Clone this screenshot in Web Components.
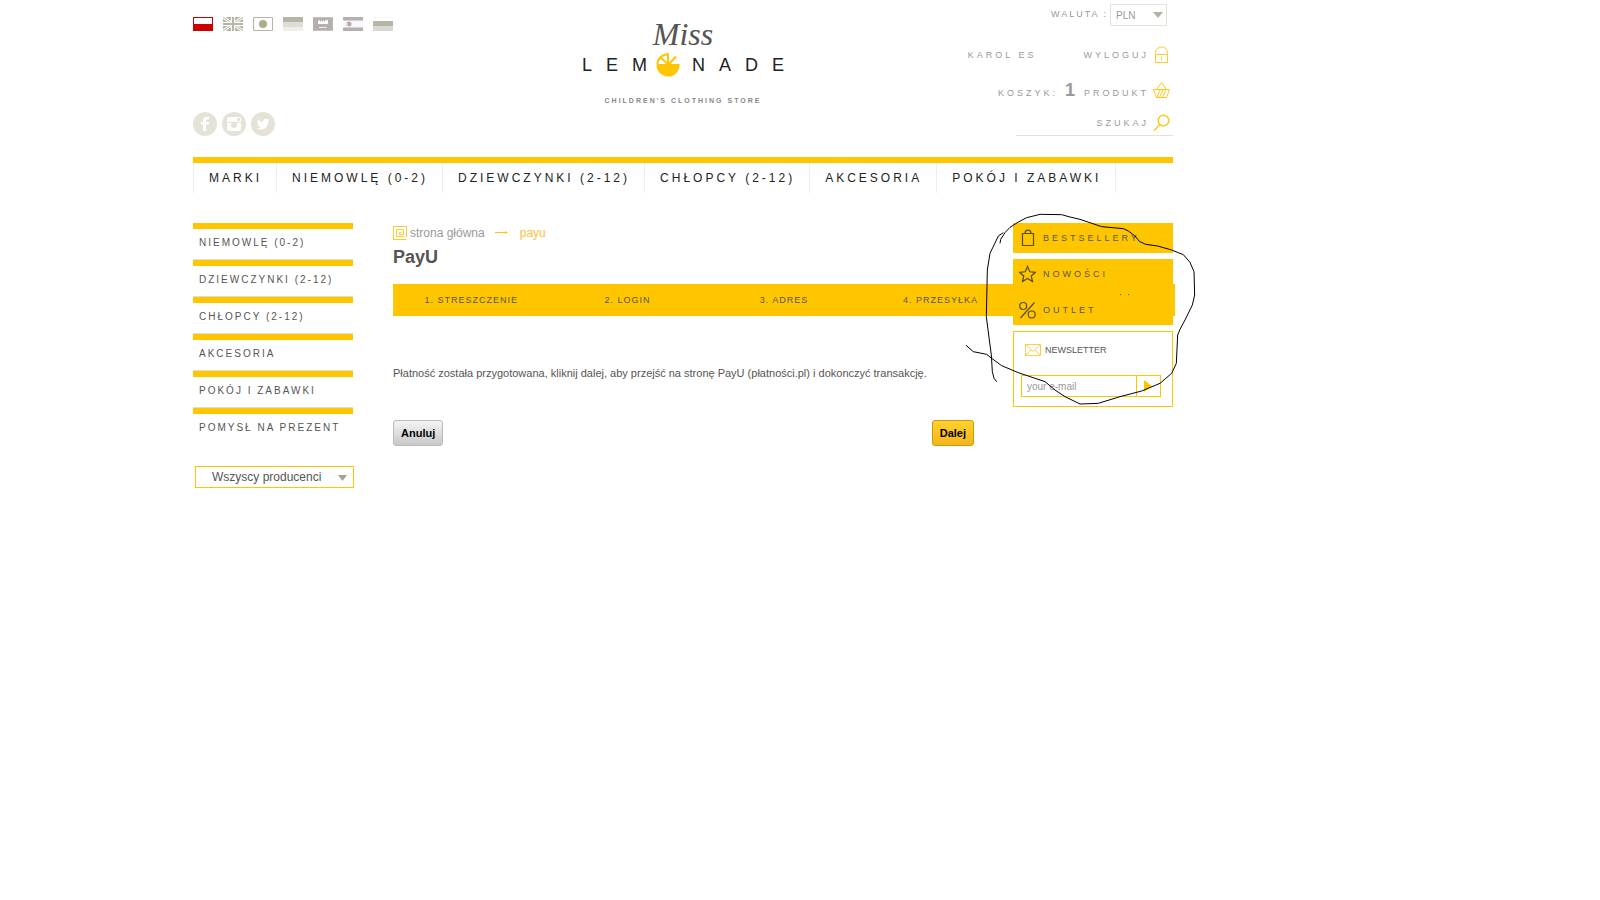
<!DOCTYPE html>
<html lang="pl">
<head>
<meta charset="utf-8">
<title>Miss Lemonade - PayU</title>
<style>
  html { --yellow: #ffc600; --ink: #555; --muted: #999; --line: #e4e3d8; }
  body { margin: 0; background: #fff; color: var(--ink); font-family: "Liberation Sans", Arial, sans-serif; font-size: 11px; }
</style>
</head>
<body>
<lemon-shop>
  <shop-header slot="header"></shop-header>
  <main-nav slot="header"></main-nav>
  <side-menu slot="left"></side-menu>
  <payu-page></payu-page>
  <side-boxes slot="right"></side-boxes>
</lemon-shop>

<script>
const reset = `<style>
  *, *::before { box-sizing: border-box; }
  :host { display: block; }
  ul, ol { list-style: none; margin: 0; padding: 0; }
  h1, p { margin: 0; }
  a { color: inherit; text-decoration: none; }
  svg { display: block; flex: none; }
  input, select, button { font-family: inherit; margin: 0; border-radius: 0; outline: 0; }
</style>`;

function define(name, html) {
  const template = document.createElement('template');
  template.innerHTML = reset + html;
  customElements.define(name, class extends HTMLElement {
    constructor() {
      super();
      this.attachShadow({ mode: 'open' }).append(template.content.cloneNode(true));
    }
  });
}

define('lemon-shop', `
<style>
  :host { position: relative; max-width: 980px; margin-left: 193px; }
  .columns { display: flex; gap: 40px; padding-top: 30px; }
  .left, .right { flex: 0 0 160px; min-width: 0; }
  .center { flex: 1; min-width: 0; }
  .right { position: relative; z-index: 1; }
  pen-mark { position: absolute; right: -32px; top: 200px; z-index: 2; pointer-events: none; }
</style>
<slot name="header"></slot>
<div class="columns">
  <div class="left"><slot name="left"></slot></div>
  <div class="center"><slot></slot></div>
  <div class="right"><slot name="right"></slot></div>
</div>
<pen-mark></pen-mark>`);

define('pen-mark', `
<svg width="250" height="220" viewBox="0 0 750 660" fill="none" stroke="#000" stroke-width="3" stroke-linejoin="round">
  <path d="M135 130L137 118L150 98L165 82L190 66L215 53L255 43L320 44L345 51L375 58L440 80L505 86L520 93L540 108L553 124L572 133L608 138L650 150L685 164L705 187L717 215L719 285L712 315L690 360L675 388L668 405L664 490L650 520L615 550L560 573L495 590L430 610L375 612L330 590L300 570L270 545L190 518L140 497L110 475L95 463L55 455L33 436"/>
  <path d="M145 98L130 108L105 160L97 210L94 350L103 420L109 465L112 515L117 535L125 545"/>
</svg>`);

define('shop-header', `
<style>
  header { display: grid; grid-template-columns: 1fr auto 1fr; height: 157px; }
  .left { display: flex; flex-direction: column; justify-content: space-between; padding: 17px 0 21px; }
</style>
<header>
  <div class="left"><language-list></language-list><social-links></social-links></div>
  <shop-logo></shop-logo>
  <account-panel></account-panel>
</header>`);

define('language-list', `
<style> ul { display: flex; gap: 10px; } a { display: block; }</style>
<ul>
  <li><a href="#pl" aria-label="Polski"><svg width="20" height="14"><path fill="#c00" d="M0 0h20v14H0z"/><path fill="#fff" d="M1 1h18v6H1z"/></svg></a></li>
  <li><a href="#en" aria-label="English"><svg width="20" height="14"><path fill="#b8b5a6" d="M0 0h20v14H0z"/><path d="M0 0L20 14M20 0L0 14" stroke="#fff" stroke-width="3"/><path d="M0 0L20 14M20 0L0 14" stroke="#b8b5a6"/><path d="M10 0V14M0 7H20" stroke="#fff" stroke-width="4"/><path d="M10 0V14M0 7H20" stroke="#b8b5a6" stroke-width="2"/></svg></a></li>
  <li><a href="#ja" aria-label="日本語"><svg width="20" height="14"><path fill="#fff" stroke="#b8b5a6" d="M.5.5h19v13H.5z"/><circle cx="10" cy="7" r="4" fill="#aeac8c"/></svg></a></li>
  <li><a href="#de" aria-label="Deutsch"><svg width="20" height="14"><path fill="#b8b5a6" d="M0 0h20v5H0z"/><path fill="#dedcd5" d="M0 5h20v5H0z"/><path fill="#efeeea" d="M0 10h20v4H0z"/></svg></a></li>
  <li><a href="#ar" aria-label="العربية"><svg width="20" height="14"><path fill="#c4c0be" d="M0 0h20v14H0z"/><path fill="#b4b0ae" d="M0 1h20v12H0z"/><path fill="#fff" d="M5 4l2-1v2l2-2v2l2-2v2l2-2 2 0v4H5z"/><path stroke="#eee" d="M6 10.500H14"/></svg></a></li>
  <li><a href="#es" aria-label="Español"><svg width="20" height="14"><path fill="#b4b0ac" d="M0 0h20v14H0z"/><path fill="#d8d3d7" d="M0 3h20v8H0z"/><path fill="#fbf7fc" d="M0 4h20v6H0z"/><circle cx="6" cy="7" r="2.500" fill="#b0adab"/><path fill="#d5d3d5" d="M3 6h2v3H3z"/></svg></a></li>
  <li><a href="#ru" aria-label="Русский"><svg width="20" height="14"><path fill="#f4f4f2" d="M0 0h20v1H0z"/><path fill="#b8b5a6" d="M0 4h20v5H0z"/><path fill="#d9d8d2" d="M0 9h20v5H0z"/></svg></a></li>
</ul>`);

define('social-links', `
<style> ul { display: flex; gap: 5px; } a { display: block; }</style>
<ul>
  <li><a href="#facebook" aria-label="Facebook"><svg width="24" height="24"><circle cx="12" cy="12" r="12" fill="#e5e3d8"/><path fill="#fff" d="M10 19v-6.500H8V10h2V8.500C10 6 11.500 5 13.500 5H16v2.600h-1.500c-1 0-1.500.4-1.500 1.200V10h3l-.4 2.500H13V19z"/></svg></a></li>
  <li><a href="#instagram" aria-label="Instagram"><svg width="24" height="24"><circle cx="12" cy="12" r="12" fill="#e5e3d8"/><rect x="5" y="5" width="14" height="14" rx="2" fill="#fff"/><path fill="#e5e3d8" d="M15 6h3v3h-3zM5 10h14v1H5z"/><circle cx="12" cy="13" r="3" fill="#e5e3d8"/><path fill="#fff" d="M10 8h4v2h-4z"/></svg></a></li>
  <li><a href="#twitter" aria-label="Twitter"><svg width="24" height="24"><circle cx="12" cy="12" r="12" fill="#e5e3d8"/><path fill="#fff" d="M18.500 8.200l-1.400 1.500c.2 4.500-3 7.800-7 7.800-1.700 0-3.200-.4-4.300-1.200 1.500.1 2.800-.3 3.900-1.100-1.200-.1-2.100-.8-2.500-1.900h1.200c-1.300-.4-2.100-1.400-2.100-2.700l1.200.3c-1.200-1-1.400-2.400-.7-3.600 1.400 1.600 3 2.500 5.200 2.700-.4-3 2.800-4.300 4.600-2.500l1.700-.6-1 1.400z"/></svg></a></li>
</ul>`);

define('shop-logo', `
<style>
  a { display: flex; flex-direction: column; align-items: center; padding-top: 18px; color: #222; }
  .miss { font: italic 32px/32px "Liberation Serif", serif; color: #555; }
  .word { display: flex; align-items: center; font-size: 18px; line-height: 24px; letter-spacing: 14px; margin-top: 3px; }
  .word svg { margin-left: -5px; }
  .tail { margin: 0 -14px 0 12px; }
  .sub { font-size: 7px; line-height: 8px; font-weight: bold; letter-spacing: 2px; color: #888; margin-top: 20px; }
</style>
<a href="#home">
  <span class="miss">Miss</span>
  <span class="word"><span>LEM</span>
    <svg width="24" height="24"><path fill="#ffc600" d="M1 11h22.500a11.500 11.500 0 0 1-23 2z"/><path fill="none" stroke="#ffc600" stroke-width="2" d="M1.500 11A10.500 10 0 0 1 12 1.200V11M12 11L4.500 4.500M13 11L20 3.500"/></svg>
    <span class="tail">NADE</span></span>
  <span class="sub">CHILDREN'S CLOTHING STORE</span>
</a>`);

define('account-panel', `
<style>
  :host { padding-top: 4px; color: #999; font-size: 9px; letter-spacing: 3px; }
  .row { display: flex; align-items: center; justify-content: flex-end; height: 24px; padding-right: 3px; }
  .currency { height: 22px; padding-right: 6px; letter-spacing: 2px; gap: 2px; }
  .currency label { padding-bottom: 2px; }
  .picker { position: relative; }
  select { appearance: none; display: block; width: 57px; height: 22px; border: 1px solid var(--line); background: #fff; color: #999; font-size: 10px; padding: 0 5px; }
  .picker svg { position: absolute; right: 4px; top: 8px; pointer-events: none; }
  .user { margin-top: 17px; }
  .user a + a { margin-left: 47px; }
  .row > svg { margin-left: 4px; }
  .cart { margin-top: 11px; }
  .cart a { display: flex; align-items: baseline; }
  .cart b { font-size: 18px; line-height: 20px; margin: 0 6px 0 7px; }
  .search { margin: 9px 0 0 auto; width: 157px; height: 25px; border-bottom: 1px solid var(--line); }
  input { width: 100px; border: 0; padding: 0; background: none; text-align: right; font-size: 9px; letter-spacing: 3px; color: #999; }
  input::placeholder { color: #999; opacity: 1; }
</style>
<div class="row currency"><label for="currency">WALUTA :</label>
  <span class="picker"><select id="currency"><option>PLN</option></select><svg width="10" height="6"><path fill="#b5b09f" d="M0 0h10L5 6z"/></svg></span></div>
<div class="row user"><a href="#account">KAROL ES</a><a href="#logout">WYLOGUJ</a>
  <svg width="17" height="18" fill="none" stroke="#ffcb2b"><path d="M2.500 8.500h12v8h-12zM2.500 8.500V6.500a6 5.500 0 0 1 12 0v2M8.500 10.500v4"/></svg></div>
<div class="row cart"><a href="#cart">KOSZYK: <b>1</b> PRODUKT</a>
  <svg width="17" height="18" fill="none" stroke="#ffc61a"><path d="M.5 8.500h16l-3 8h-10zM3.500 8.500L8.500 1.500l5 7M4 16L7 9M6.500 16L10 9M9.500 16L13 9"/></svg></div>
<form class="row search"><input type="text" placeholder="SZUKAJ" aria-label="SZUKAJ">
  <svg width="17" height="18" fill="none" stroke="#ffc61a" stroke-width="1.500"><circle cx="10.500" cy="6.500" r="5.300"/><path d="M7 10.500L1 16.500"/></svg></form>`);

define('main-nav', `
<style>
  nav { border-top: 6px solid var(--yellow); }
  ul { display: flex; height: 30px; }
  li { border-left: 1px solid #eee; padding: 0 14px 0 15px; }
  li:last-child { border-right: 1px solid #eee; }
  a { color: #222; font-size: 12px; line-height: 30px; letter-spacing: 3px; white-space: nowrap; }
</style>
<nav><ul>
  <li><a href="#marki">MARKI</a></li>
  <li><a href="#niemowle">NIEMOWLĘ (0-2)</a></li>
  <li><a href="#dziewczynki">DZIEWCZYNKI (2-12)</a></li>
  <li><a href="#chlopcy">CHŁOPCY (2-12)</a></li>
  <li><a href="#akcesoria">AKCESORIA</a></li>
  <li><a href="#pokoj">POKÓJ I ZABAWKI</a></li>
</ul></nav>`);

define('side-menu', `
<style>
  li { height: 37px; border-top: 6px solid var(--yellow); border-bottom: 1px solid #ddd; padding-left: 6px; }
  li:last-child { border-bottom: 0; }
  a { display: block; font-size: 10px; line-height: 27px; letter-spacing: 2px; white-space: nowrap; }
  .picker { position: relative; margin: 21px -1px 0 2px; }
  select { appearance: none; display: block; width: 100%; height: 22px; border: 1px solid var(--yellow); background: #fff; color: #555; font-size: 12px; padding: 0 16px; }
  svg { position: absolute; right: 7px; top: 9px; pointer-events: none; }
</style>
<nav><ul>
  <li><a href="#niemowle">NIEMOWLĘ (0-2)</a></li>
  <li><a href="#dziewczynki">DZIEWCZYNKI (2-12)</a></li>
  <li><a href="#chlopcy">CHŁOPCY (2-12)</a></li>
  <li><a href="#akcesoria">AKCESORIA</a></li>
  <li><a href="#pokoj">POKÓJ I ZABAWKI</a></li>
  <li><a href="#prezent">POMYSŁ NA PREZENT</a></li>
</ul></nav>
<div class="picker"><select aria-label="Producent"><option>Wszyscy producenci</option></select><svg width="9" height="6"><path fill="#a5a294" d="M0 0h9L4.500 6z"/></svg></div>`);

define('payu-page', `
<style>
  .crumbs { display: flex; align-items: center; height: 20px; font-size: 12px; color: #999; }
  .crumbs a { display: flex; align-items: center; gap: 3px; }
  .arrow { margin: 0 12px 0 10px; }
  .here { color: #fdbe3b; }
  h1 { font-size: 18px; line-height: 22px; margin-top: 3px; }
  .steps { display: grid; grid-template-columns: repeat(5, 1fr); margin: 16px -202px 0 0; background: var(--yellow); height: 32px; }
  .steps li { text-align: center; font-size: 9px; line-height: 32px; letter-spacing: 1px; }
  .message { font-size: 11px; line-height: 16px; margin-top: 49px; }
  .actions { display: flex; justify-content: space-between; margin-top: 39px; }
  button { height: 26px; padding: 0 7px; border: 1px solid #bbb; border-radius: 3px; font-size: 11px; font-weight: bold; color: #000; background: linear-gradient(#f4f4f4, #c8c8c8); }
  button.next { border-color: #cc9a08; background: linear-gradient(#ffd12d, #f5b51c); margin-right: -1px; }
</style>
<nav class="crumbs">
  <a href="#home"><svg width="14" height="14" fill="none" stroke="#ffcb2b"><path d="M13.500 11V.5H.5v13h13M11 10.500H3.500v-7h7v5h-4v-2h2"/></svg><span>strona główna</span></a>
  <svg class="arrow" width="13" height="8"><path fill="#ffc600" d="M0 3h10V2l3 1.500L10 5V4H0z"/></svg>
  <span class="here">payu</span>
</nav>
<h1>PayU</h1>
<ol class="steps">
  <li>1. STRESZCZENIE</li><li>2. LOGIN</li><li>3. ADRES</li><li>4. PRZESYŁKA</li>
</ol>
<p class="message">Płatność została przygotowana, kliknij dalej, aby przejść na stronę PayU (płatności.pl) i dokonczyć transakcję.</p>
<div class="actions"><button type="button">Anuluj</button><button type="button" class="next">Dalej</button></div>`);

define('side-boxes', `
<style>
  ul { display: grid; gap: 6px; }
  li { position: relative; }
  li a { display: flex; align-items: center; gap: 7px; height: 30px; padding: 0 6px; background: var(--yellow); font-size: 9px; letter-spacing: 3px; }
  .specks { position: absolute; left: 107px; bottom: -6px; }
  .news { margin-top: 6px; height: 76px; padding: 11px 11px 0 7px; border: 1px solid var(--yellow); }
  label { display: flex; align-items: center; gap: 4px; height: 14px; padding-left: 4px; font-size: 9px; }
  .field { display: flex; height: 22px; margin-top: 18px; border: 1px solid var(--yellow); }
  input { flex: 1; width: 0; min-width: 0; border: 0; padding: 0 5px; font-size: 10px; color: #999; background: none; }
  input::placeholder { color: #999; opacity: 1; }
  button { width: 24px; border: 0; border-left: 1px solid var(--yellow); padding: 0 0 0 7px; background: none; }
</style>
<ul>
  <li><a href="#bestsellery"><svg width="17" height="18" fill="none" stroke="#554a1c" stroke-width="1.200"><path d="M3.500 4.500h11v12h-11zM6 4.500C6 0 12 0 12 4.500"/></svg>BESTSELLERY</a></li>
  <li><a href="#nowosci"><svg width="17" height="18" fill="none" stroke="#554a1c" stroke-width="1.200"><path d="M8.500 1.500l2.300 5.300 5.700.5-4.300 3.700 1.300 5.500-5-3-5 3 1.300-5.500L.5 7.300l5.700-.5z"/></svg>NOWOŚCI</a>
    <svg class="specks" width="12" height="6"><path fill="#555" d="M0 5h1v1H0zM8 5h1v1H8z"/></svg></li>
  <li><a href="#outlet"><svg width="17" height="18" fill="none" stroke="#554a1c" stroke-width="1.200"><circle cx="4.200" cy="5" r="3.500"/><circle cx="12.700" cy="13.500" r="3.500"/><path d="M15.500 1.500L1.500 17"/></svg>OUTLET</a></li>
</ul>
<form class="news">
  <label for="mail"><svg width="16" height="12" fill="none" stroke="#ffcb4a"><path d="M.5.5h15v11H.5zM.5.5L8 7.500l7.500-7M.5 11.500L6 6M15.500 11.500L10 6"/></svg>NEWSLETTER</label>
  <div class="field"><input id="mail" type="email" placeholder="your e-mail"><button type="button" aria-label="Wyślij"><svg width="8" height="12"><path fill="#ffc600" d="M0 0l8 6-8 6z"/></svg></button></div>
</form>`);
</script>
</body>
</html>
